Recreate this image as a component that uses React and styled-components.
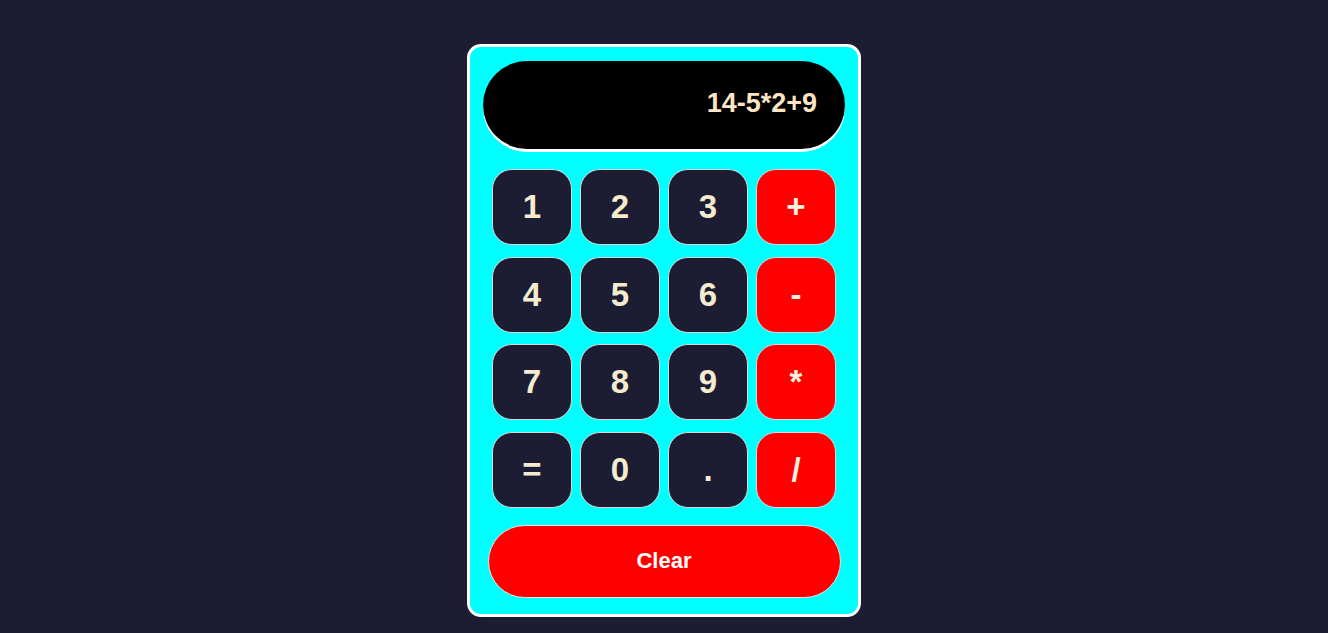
import React from 'react';
import styled, { createGlobalStyle } from 'styled-components';

const GlobalStyle = createGlobalStyle`
  html, body {
    margin: 0;
    padding: 0;
    background: #1c1c32;
    font-family: "Liberation Sans", Arial, sans-serif;
  }
`;

const Page = styled.main`
  display: flex;
  justify-content: center;
  align-items: flex-start;
  padding-top: 44px;
  min-height: 100vh;
  box-sizing: border-box;
`;

const Card = styled.div`
  width: 394px;
  box-sizing: border-box;
  background: #00ffff;
  border: 3px solid #ffffff;
  border-radius: 14px;
  padding: 14px 12px 16px;
  display: flex;
  flex-direction: column;
  align-items: center;
`;

const Display = styled.div`
  width: 362px;
  height: 88px;
  box-sizing: border-box;
  background: #000;
  border-radius: 46px;
  box-shadow: 0 3px 0 #ffffff;
  display: flex;
  align-items: center;
  justify-content: flex-end;
  padding: 0 28px 4px 0;
  color: #fde4c4;
  font-size: 27px;
  font-weight: 700;
`;

const Keys = styled.div`
  display: grid;
  grid-template-columns: repeat(4, 80px);
  grid-auto-rows: 76px;
  column-gap: 8px;
  row-gap: 11.5px;
  margin-top: 20px;
`;

const Key = styled.button`
  border: 1px solid #d8d8d8;
  border-radius: 20px;
  background: ${({ $op }) => ($op ? '#ff0000' : '#1c1c32')};
  color: ${({ $op }) => ($op ? '#fbf1e0' : '#f5ecd0')};
  font-family: "Liberation Sans", Arial, sans-serif;
  font-size: 33px;
  font-weight: 700;
  cursor: pointer;
  padding: 0;
`;

const ClearButton = styled.button`
  width: 353px;
  height: 73px;
  margin-top: 17px;
  border: 1px solid #e6e6e6;
  border-radius: 37px;
  background: #ff0000;
  color: #ffffff;
  font-family: "Liberation Sans", Arial, sans-serif;
  font-size: 22px;
  font-weight: 700;
  cursor: pointer;
`;

const keys = ['1', '2', '3', '+', '4', '5', '6', '-', '7', '8', '9', '*', '=', '0', '.', '/'];
const ops = ['+', '-', '*', '/'];

export default function App() {
  return (
    <>
      <GlobalStyle />
      <Page>
        <Card>
          <Display>14-5*2+9</Display>
          <Keys>
            {keys.map((k) => (
              <Key key={k} $op={ops.includes(k)}>
                {k}
              </Key>
            ))}
          </Keys>
          <ClearButton>Clear</ClearButton>
        </Card>
      </Page>
    </>
  );
}
